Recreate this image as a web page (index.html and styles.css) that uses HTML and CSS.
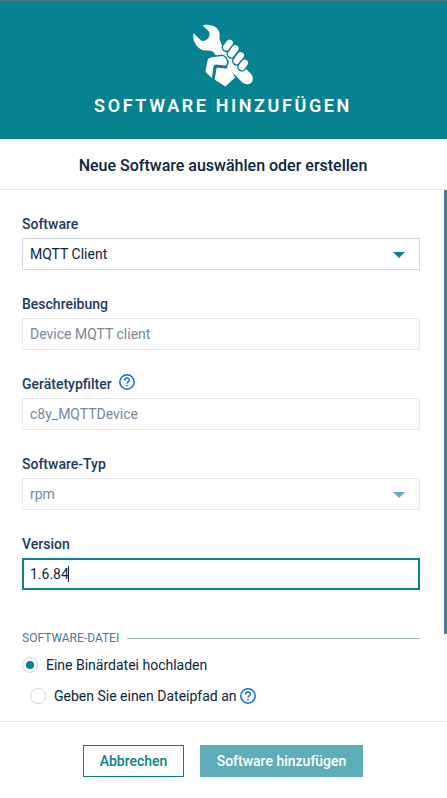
FILE: index.html
```html
<!DOCTYPE html>
<html lang="de">
<head>
<meta charset="utf-8">
<title>Software hinzufügen</title>
<link rel="stylesheet" href="styles.css">
</head>
<body>
<div class="modal">
  <header class="modal-header">
    <svg class="header-icon" viewBox="39 27 183 188" fill="#fff">
      <path d="M68 30C84 27 100 30 109 38C118 46 121 57 118 71L125 89L211 174C221 183 220 197 212 204C204 209 193 208 185 200L105 118C101 109 94 105 83 106C68 107 55 100 47 87C40 77 38 65 41 54L63 76C70 79 79 76 84 70C89 64 90 55 86 48Z"/>
      <g class="fingers">
        <rect x="-10" y="-18" width="20" height="36" rx="10" transform="translate(144 90) rotate(36)"/>
        <rect x="-10" y="-20" width="20" height="40" rx="10" transform="translate(160 108) rotate(36)"/>
        <rect x="-10" y="-20" width="20" height="40" rx="10" transform="translate(176 129) rotate(36)"/>
        <rect x="-10" y="-17" width="20" height="34" rx="10" transform="translate(190 149) rotate(36)"/>
        <path d="M91 127L122 123C130 122 137 127 139 133C143 140 142 147 136 151L108 148Q101 149 100 156L96 189L79 173Q76 170 77 166L82 138Q84 129 91 127Z"/>
      </g>
      <path d="M110 158L138 160C144 159 147 157 149 155L165 187L136 214L104 193Z"/>
    </svg>
    <h1>Software hinzufügen</h1>
  </header>
  <div class="modal-title">Neue Software auswählen oder erstellen</div>
  <main class="modal-body">
    <div class="scroll-thumb"></div>
    <div class="field">
      <div class="label">Software</div>
      <div class="control">MQTT Client<svg class="caret" viewBox="0 0 12 6"><path d="M0 0H12L6 6Z"/></svg></div>
    </div>
    <div class="field">
      <div class="label">Beschreibung</div>
      <div class="control disabled">Device MQTT client</div>
    </div>
    <div class="field">
      <div class="label">Gerätetypfilter
        <svg class="help" viewBox="0 0 16 16"><circle cx="8" cy="8" r="7.200"/><path d="M5.700 6.400C5.700 3.200 10.300 3.200 10.300 6.200C10.300 7.800 8 7.900 8 9.600M8 11V12.500"/></svg>
      </div>
      <div class="control disabled">c8y_MQTTDevice</div>
    </div>
    <div class="field">
      <div class="label">Software-Typ</div>
      <div class="control disabled">rpm<svg class="caret" viewBox="0 0 12 6"><path d="M0 0H12L6 6Z"/></svg></div>
    </div>
    <div class="field">
      <div class="label">Version</div>
      <div class="control focused">1.6.84<span class="cursor"></span></div>
    </div>
    <div class="legend">Software-Datei</div>
    <div class="option"><span class="radio checked"></span>Eine Binärdatei hochladen</div>
    <div class="option indented"><span class="radio"></span>Geben Sie einen Dateipfad an
      <svg class="help" viewBox="0 0 16 16"><circle cx="8" cy="8" r="7.200"/><path d="M5.700 6.400C5.700 3.200 10.300 3.200 10.300 6.200C10.300 7.800 8 7.900 8 9.600M8 11V12.500"/></svg>
    </div>
  </main>
  <footer class="modal-footer">
    <div class="btn">Abbrechen</div>
    <div class="btn primary">Software hinzufügen</div>
  </footer>
</div>
</body>
</html>
```
FILE: styles.css
```css
* { box-sizing: border-box; }
body {
  margin: 0;
  background: #fff;
  color: #0b2540;
  font: 14px/20px Roboto, sans-serif;
}
.modal {
  display: flex;
  flex-direction: column;
  height: 798px;
  overflow: hidden;
}
.modal-header {
  display: flex;
  flex-direction: column;
  align-items: center;
  height: 139px;
  padding-top: 23px;
  background: #068291;
  border-top: 1px solid #5f7479;
  color: #fff;
}
.header-icon { width: 61px; height: 63px; }
.fingers {
  stroke: #068291;
  stroke-width: 9;
  paint-order: stroke;
}
h1 {
  margin: 7px 0 0;
  padding-right: 1px;
  font-size: 18px;
  line-height: 24px;
  font-weight: 600;
  letter-spacing: 2.6px;
  text-transform: uppercase;
  white-space: nowrap;
}
.modal-title {
  height: 51px;
  padding: 15px 1px 0 0;
  border-bottom: 1px solid #e1e3e6;
  color: #0b2540;
  font-size: 16px;
  line-height: 24px;
  font-weight: 500;
  text-align: center;
}
.modal-body {
  position: relative;
  flex: 1;
  padding: 24px 27px 0 22px;
}
.scroll-thumb {
  position: absolute;
  top: 0;
  right: 0;
  width: 3px;
  height: 444px;
  background: #52759a;
}
.field { height: 80px; }
.label {
  display: flex;
  align-items: center;
  height: 20px;
  margin-bottom: 4px;
  color: #1b3a5c;
  font-weight: 500;
}
.help {
  width: 16px;
  height: 16px;
  fill: none;
  stroke: #0f70d1;
  stroke-width: 1.5;
}
.label .help { margin: -4px 0 0 7px; }
.control {
  display: flex;
  align-items: center;
  height: 32px;
  padding: 0 14px 0 7px;
  border: 1px solid #d0d6df;
}
.control.disabled { border-color: #e6e8ec; color: #76879a; }
.control.focused { padding-left: 6px; border: 2px solid #068291; }
.cursor { width: 1px; height: 16px; margin-left: -1px; background: #0b2540; }
.caret {
  width: 12px;
  height: 6px;
  margin: 1px 0 0 auto;
  fill: #068291;
}
.disabled .caret { fill: #5eadb8; }
.legend {
  display: flex;
  align-items: center;
  gap: 8px;
  height: 16px;
  margin-top: 16px;
  color: #52759a;
  font-size: 12px;
  text-transform: uppercase;
}
.legend::after {
  content: "";
  flex: 1;
  height: 1px;
  background: #a3b6ca;
}
.option {
  display: flex;
  align-items: center;
  height: 20px;
  margin-top: 9px;
}
.option.indented { margin: 11px 0 0 8px; }
.option .help { margin-left: 3px; }
.radio {
  display: flex;
  align-items: center;
  justify-content: center;
  width: 16px;
  height: 16px;
  margin-right: 8px;
  border: 1px solid #d0d6df;
  border-radius: 50%;
}
.checked::before {
  content: "";
  width: 8px;
  height: 8px;
  border-radius: 50%;
  background: #068291;
}
.modal-footer {
  display: flex;
  justify-content: center;
  gap: 16px;
  height: 77px;
  padding: 23px 1px 0 0;
  border-top: 1px solid #e1e3e6;
}
.btn {
  width: 101px;
  height: 32px;
  border: 1px solid #068291;
  color: #068291;
  font-weight: 500;
  line-height: 31px;
  text-align: center;
}
.btn.primary {
  width: 163px;
  background: #5eadb8;
  border-color: #5eadb8;
  color: #fff;
}
```
